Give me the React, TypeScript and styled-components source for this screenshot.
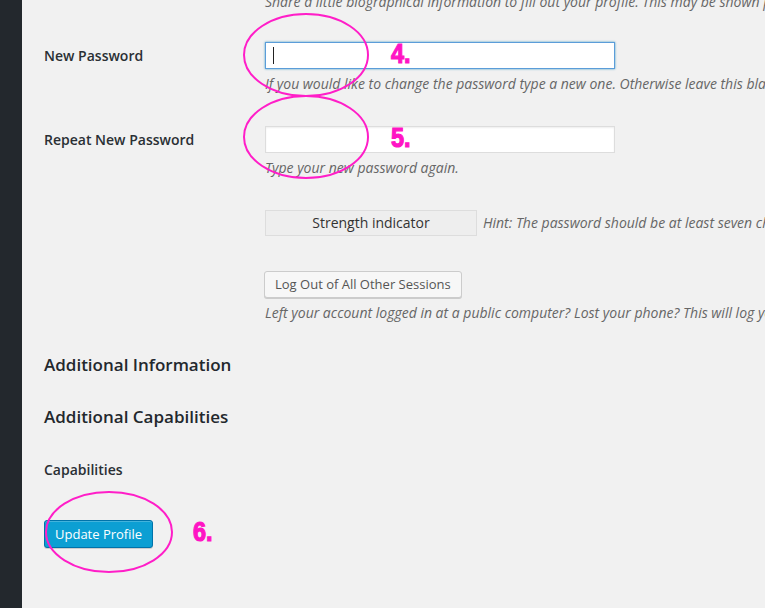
import React from "react";
import styled, { createGlobalStyle } from "styled-components";

const Global = createGlobalStyle`
  html, body { margin: 0; padding: 0; }
  body {
    background: #f1f1f1;
    font-family: "Open Sans", "Liberation Sans", sans-serif;
    color: #23282d;
    overflow: hidden;
    width: 765px;
    height: 608px;
  }
`;

const Page = styled.div`
  position: relative;
  display: flex;
  width: 765px;
  height: 608px;
  overflow: hidden;
`;

const Sidebar = styled.div`
  flex: 0 0 22px;
  background: #23282d;
`;

const Content = styled.div`
  flex: 1;
  padding-left: 22px;
  margin-top: -8px;
  display: flex;
  flex-direction: column;
  min-width: 0;
`;

const FieldRow = styled.div<{ $gap?: number }>`
  display: grid;
  grid-template-columns: 221px 1fr;
  margin-top: ${(p) => p.$gap ?? 0}px;
`;

const Label = styled.div<{ $lh?: number }>`
  font-size: 14px;
  font-weight: 600;
  line-height: ${(p) => p.$lh ?? 27}px;
  color: #2a2f34;
  white-space: nowrap;
`;

const Cell = styled.div`
  display: flex;
  flex-direction: column;
  align-items: flex-start;
  min-width: 0;
`;

const Field = styled.div<{ $focus?: boolean }>`
  box-sizing: border-box;
  width: 350px;
  height: 27px;
  background: #fff;
  border: 1px solid ${(p) => (p.$focus ? "#5b9dd9" : "#ddd")};
  box-shadow: ${(p) =>
    p.$focus ? "0 0 2px rgba(30,140,190,.8)" : "inset 0 1px 2px rgba(0,0,0,.07)"};
  display: flex;
  align-items: center;
  padding-left: 7px;
`;

const Caret = styled.span`
  display: block;
  width: 1px;
  height: 17px;
  background: #222;
`;

const Description = styled.p<{ $gap?: number }>`
  margin: ${(p) => p.$gap ?? 5}px 0 0;
  font-size: 14px;
  font-style: italic;
  line-height: 20px;
  color: #666;
  white-space: nowrap;
`;

const Inline = styled.div`
  display: flex;
  align-items: center;
  gap: 6px;
`;

const Strength = styled.div`
  box-sizing: border-box;
  width: 212px;
  height: 26px;
  padding-bottom: 2px;
  background: #eee;
  border: 1px solid #ddd;
  font-size: 14px;
  color: #333;
  display: flex;
  align-items: center;
  justify-content: center;
`;

const Hint = styled.span`
  font-size: 14px;
  font-style: italic;
  color: #666;
  white-space: nowrap;
  margin-top: -2px;
`;

const SecondaryButton = styled.button`
  box-sizing: border-box;
  height: 27px;
  margin-left: -1px;
  padding: 0 10px 1px;
  font-family: inherit;
  font-size: 13px;
  color: #555;
  background: #f7f7f7;
  border: 1px solid #ccc;
  border-radius: 3px;
  box-shadow: 0 1px 0 #ccc;
  white-space: nowrap;
`;

const SectionTitle = styled.h2<{ $gap: number }>`
  margin: ${(p) => p.$gap}px 0 0;
  font-size: 17px;
  font-weight: 600;
  line-height: 24px;
  color: #23282d;
`;

const PrimaryButton = styled.button`
  align-self: flex-start;
  box-sizing: border-box;
  height: 28px;
  margin-top: 40px;
  padding: 0 10px 1px;
  font-family: inherit;
  font-size: 13px;
  color: #fff;
  background: #0c9fd3;
  border: 1px solid #0073aa;
  border-radius: 3px;
  box-shadow: inset 0 1px 0 rgba(120, 200, 230, 0.5), 0 1px 0 rgba(0, 0, 0, 0.15);
  white-space: nowrap;
`;

const Overlay = styled.svg`
  position: absolute;
  left: 0;
  top: 0;
  pointer-events: none;
`;

const Number = styled.span<{ $x: number; $y: number }>`
  position: absolute;
  left: ${(p) => p.$x}px;
  top: ${(p) => p.$y}px;
  font-family: "Liberation Sans", sans-serif;
  font-weight: 700;
  font-size: 27px;
  line-height: 27px;
  color: #ff14c4;
  -webkit-text-stroke: 1.2px #ff14c4;
  transform: scaleX(0.87);
  transform-origin: left top;
`;

export default function App() {
  return (
    <Page>
      <Global />
      <Sidebar />
      <Content>
        <FieldRow>
          <span />
          <Description $gap={0}>
            Share a little biographical information to fill out your profile. This may be shown publicly.
          </Description>
        </FieldRow>

        <FieldRow $gap={30}>
          <Label>New Password</Label>
          <Cell>
            <Field $focus>
              <Caret />
            </Field>
            <Description>
              If you would like to change the password type a new one. Otherwise leave this blank.
            </Description>
          </Cell>
        </FieldRow>

        <FieldRow $gap={32}>
          <Label>Repeat New Password</Label>
          <Cell>
            <Field />
            <Description>Type your new password again.</Description>
          </Cell>
        </FieldRow>

        <FieldRow $gap={32}>
          <span />
          <Inline>
            <Strength>Strength indicator</Strength>
            <Hint>
              Hint: The password should be at least seven characters long. To make it stronger, use upper and lower case letters, numbers, and symbols like ! " ? $ % ^ &amp; ).
            </Hint>
          </Inline>
        </FieldRow>

        <FieldRow $gap={35}>
          <span />
          <Cell>
            <SecondaryButton>Log Out of All Other Sessions</SecondaryButton>
            <Description>
              Left your account logged in at a public computer? Lost your phone? This will log you out everywhere, but keep you logged in here.
            </Description>
          </Cell>
        </FieldRow>

        <SectionTitle $gap={30}>Additional Information</SectionTitle>
        <SectionTitle $gap={28}>Additional Capabilities</SectionTitle>

        <FieldRow $gap={31}>
          <Label $lh={20}>Capabilities</Label>
        </FieldRow>

        <PrimaryButton>Update Profile</PrimaryButton>
      </Content>

      <Overlay width="765" height="608" viewBox="0 0 765 608">
        <g fill="none" stroke="#ff1ec8" strokeWidth="2">
          <ellipse cx="306" cy="55" rx="62" ry="41" />
          <ellipse cx="306" cy="137" rx="62" ry="41" />
          <ellipse cx="109" cy="532" rx="63" ry="40" />
        </g>
      </Overlay>
      <Number $x={391} $y={41}>4.</Number>
      <Number $x={391} $y={125}>5.</Number>
      <Number $x={193} $y={519}>6.</Number>
    </Page>
  );
}
